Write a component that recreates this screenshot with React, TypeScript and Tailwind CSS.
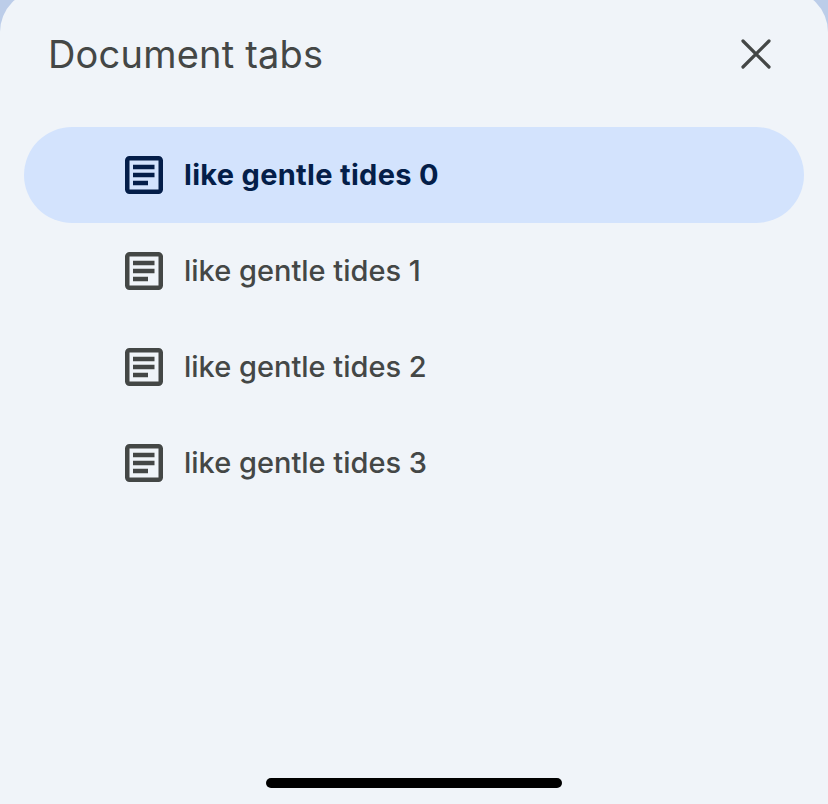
const DocIcon = ({ className }: { className: string }) => (
  <svg className={className} width="40" height="40" viewBox="0 0 40 40" fill="currentColor">
    <path
      fillRule="evenodd"
      d="M5.5 1H34.5C37 1 39 3 39 5.5V34.5C39 37 37 39 34.5 39H5.5C3 39 1 37 1 34.5V5.5C1 3 3 1 5.5 1ZM5.5 5.5V34.5H34.5V5.5H5.5Z"
    />
    <rect x="9" y="9.75" width="21.5" height="4.5" />
    <rect x="9" y="17.75" width="21.5" height="4.5" />
    <rect x="9" y="25.75" width="15" height="4.5" />
  </svg>
);

const tabs = ['like gentle tides 0', 'like gentle tides 1', 'like gentle tides 2', 'like gentle tides 3'];

export default function App() {
  return (
    <div className="h-[804px] w-[828px] overflow-hidden bg-[#bccde9] font-['Inter',sans-serif]">
      <div className="-mt-[10px] flex h-[814px] flex-col rounded-t-[42px] bg-[#f0f4f9]">
        <div className="flex h-[137px] items-start justify-between pl-[48px] pr-[54px] pt-[40px]">
          <h1 className="text-[38px] font-normal leading-[48px] tracking-[0.2px] text-[#444746]">Document tabs</h1>
          <button className="mt-[6px] text-[#444746]">
            <svg width="36" height="36" viewBox="0 0 36 36" fill="none" stroke="currentColor" strokeWidth="3.2" strokeLinecap="round">
              <path d="M5 5L31 31M31 5L5 31" />
            </svg>
          </button>
        </div>

        <div className="flex flex-1 flex-col px-[24px]">
          {tabs.map((tab, i) => (
            <div
              key={tab}
              className={
                i === 0
                  ? 'flex h-[96px] items-center gap-[20px] rounded-full bg-[#d3e3fd] pl-[100px] text-[#041e49]'
                  : 'flex h-[96px] items-center gap-[20px] pl-[100px] text-[#444746]'
              }
            >
              <DocIcon className="shrink-0" />
              <span className={i === 0 ? 'text-[29px] font-bold tracking-[0.3px]' : 'text-[29px] font-medium'}>{tab}</span>
            </div>
          ))}
        </div>

        <div className="flex h-[42px] justify-center pt-[16px]">
          <div className="h-[10px] w-[296px] rounded-full bg-black" />
        </div>
      </div>
    </div>
  );
}
